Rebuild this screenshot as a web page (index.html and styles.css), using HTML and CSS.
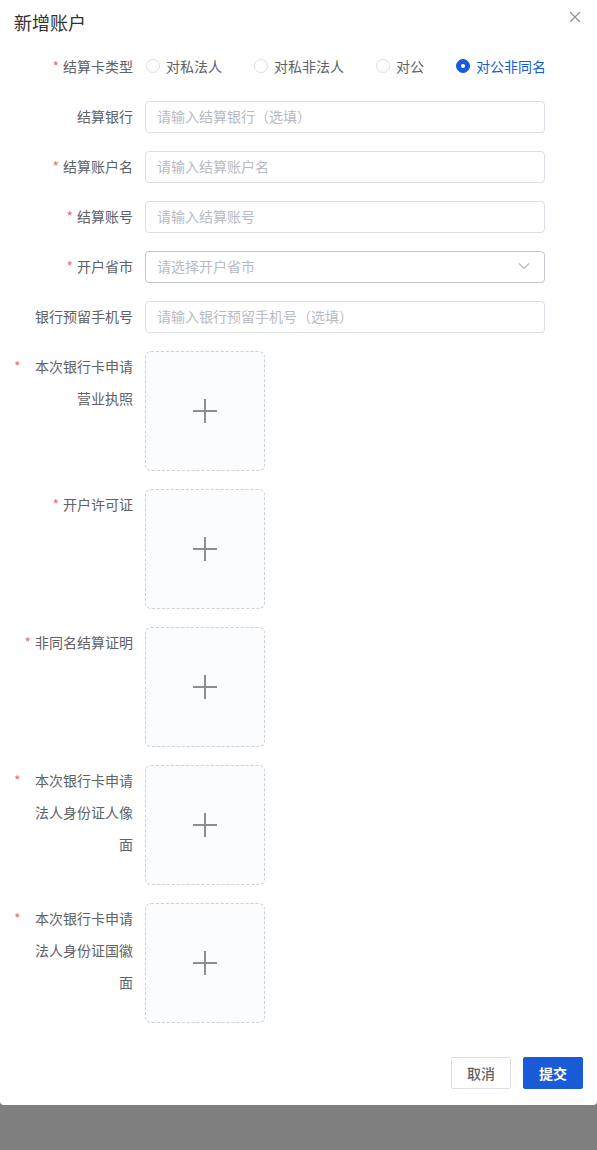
FILE: index.html
```html
<!DOCTYPE html>
<html lang="zh-CN">
<head>
<meta charset="utf-8">
<title>新增账户</title>
<link rel="stylesheet" href="styles.css">
</head>
<body>
<div class="dialog">
  <div class="dialog-header">
    <span class="dialog-title">新增账户</span>
    <button class="close" aria-label="关闭">
      <svg width="12" height="12" viewBox="0 0 12 12"><path d="M1 1L11 11M11 1L1 11" stroke="#909399" stroke-width="1.2" fill="none"/></svg>
    </button>
  </div>
  <form class="form">
    <div class="row">
      <label class="label"><span class="star">*</span><span class="ltext">结算卡类型</span></label>
      <div class="control radios">
        <span class="radio"><span class="circle"></span><span class="rtext">对私法人</span></span>
        <span class="radio"><span class="circle"></span><span class="rtext">对私非法人</span></span>
        <span class="radio"><span class="circle"></span><span class="rtext">对公</span></span>
        <span class="radio checked"><span class="circle"></span><span class="rtext">对公非同名</span></span>
      </div>
    </div>
    <div class="row">
      <label class="label"><span class="ltext">结算银行</span></label>
      <div class="control"><input class="input" placeholder="请输入结算银行（选填）"></div>
    </div>
    <div class="row">
      <label class="label"><span class="star">*</span><span class="ltext">结算账户名</span></label>
      <div class="control"><input class="input" placeholder="请输入结算账户名"></div>
    </div>
    <div class="row">
      <label class="label"><span class="star">*</span><span class="ltext">结算账号</span></label>
      <div class="control"><input class="input" placeholder="请输入结算账号"></div>
    </div>
    <div class="row">
      <label class="label"><span class="star">*</span><span class="ltext">开户省市</span></label>
      <div class="control">
        <div class="select">
          <span class="placeholder">请选择开户省市</span>
          <svg class="arrow" width="12" height="8" viewBox="0 0 12 8"><path d="M1 1.5L6 6.5L11 1.5" stroke="#b4b7be" stroke-width="1.2" fill="none"/></svg>
        </div>
      </div>
    </div>
    <div class="row">
      <label class="label"><span class="ltext">银行预留手机号</span></label>
      <div class="control"><input class="input" placeholder="请输入银行预留手机号（选填）"></div>
    </div>
    <div class="row">
      <label class="label"><span class="star">*</span><span class="ltext">本次银行卡申请营业执照</span></label>
      <div class="control"><div class="upload"><span class="plus"></span></div></div>
    </div>
    <div class="row">
      <label class="label"><span class="star">*</span><span class="ltext">开户许可证</span></label>
      <div class="control"><div class="upload"><span class="plus"></span></div></div>
    </div>
    <div class="row">
      <label class="label"><span class="star">*</span><span class="ltext">非同名结算证明</span></label>
      <div class="control"><div class="upload"><span class="plus"></span></div></div>
    </div>
    <div class="row">
      <label class="label"><span class="star">*</span><span class="ltext">本次银行卡申请法人身份证人像面</span></label>
      <div class="control"><div class="upload"><span class="plus"></span></div></div>
    </div>
    <div class="row">
      <label class="label"><span class="star">*</span><span class="ltext">本次银行卡申请法人身份证国徽面</span></label>
      <div class="control"><div class="upload"><span class="plus"></span></div></div>
    </div>
  </form>
  <div class="footer">
    <button class="btn">取消</button>
    <button class="btn primary">提交</button>
  </div>
</div>
</body>
</html>
```

FILE: styles.css
```css
* { box-sizing: border-box; }
html, body { margin: 0; padding: 0; }
body {
  background: #7f7f7f;
  font-family: "Noto Sans CJK SC", "Noto Sans", sans-serif;
  font-size: 14px;
  color: #606266;
  height: 1150px;
}
.dialog {
  width: 597px;
  background: #fff;
  border-radius: 0 0 4px 4px;
}
.dialog-header {
  height: 51px;
  padding: 8px 14px 0 14px;
  display: flex;
  justify-content: space-between;
  align-items: flex-start;
}
.dialog-title {
  font-size: 18px;
  line-height: 28px;
  color: #303133;
}
.close {
  border: 0;
  background: none;
  padding: 0;
  margin: 3px 2px 0 0;
  width: 12px;
  height: 12px;
  display: flex;
}
.form {
  padding: 0 52px 0 14px;
}
.row {
  display: flex;
  margin-bottom: 18px;
}
.label {
  width: 119px;
  flex: none;
  margin-right: 12px;
  margin-top: -1px;
  display: flex;
  justify-content: flex-end;
  align-items: flex-start;
  line-height: 32px;
  color: #606266;
}
.star {
  color: #f56c6c;
  margin-right: 4px;
  flex: none;
}
.ltext {
  text-align: right;
  min-width: 0;
}
.control {
  flex: 1;
  min-width: 0;
}
.radios {
  display: flex;
  align-items: center;
  height: 32px;
  padding-bottom: 2px;
}
.radio {
  display: flex;
  align-items: center;
  flex: none;
  white-space: nowrap;
  margin-right: 31px;
  color: #606266;
}
.radio:last-child { margin-right: 0; }
.circle {
  width: 14px;
  height: 14px;
  border: 1px solid #dcdfe6;
  border-radius: 50%;
  margin-left: 1px;
  margin-right: 6px;
  background: #fff;
  position: relative;
  flex: none;
}
.radio.checked .circle {
  background: #1a5cd7;
  border-color: #1a5cd7;
}
.radio.checked .circle::after {
  content: "";
  position: absolute;
  width: 4px;
  height: 4px;
  border-radius: 50%;
  background: #fff;
  left: 4px;
  top: 4px;
}
.radio.checked .rtext { color: #1a5cd7; }
.input {
  width: 400px;
  height: 32px;
  border: 1px solid #dcdfe6;
  border-radius: 4px;
  padding: 0 11px 2px 11px;
  font-family: inherit;
  font-size: 14px;
  color: #606266;
  outline: none;
  display: block;
}
.input::placeholder { color: #b8bbc2; }
.select {
  width: 400px;
  height: 32px;
  border: 1px solid #c4c7ce;
  border-radius: 4px;
  padding: 0 14px 2px 11px;
  display: flex;
  align-items: center;
  justify-content: space-between;
}
.placeholder { color: #b8bbc2; }
.upload {
  width: 120px;
  height: 120px;
  border: 1px dashed #cdd0d6;
  border-radius: 6px;
  background: #fbfcfe;
  display: flex;
  align-items: center;
  justify-content: center;
}
.plus {
  width: 24px;
  height: 24px;
  position: relative;
}
.plus::before, .plus::after {
  content: "";
  position: absolute;
  background: #8c8d94;
}
.plus::before { left: 0; right: 0; top: 11px; height: 2px; }
.plus::after { top: 0; bottom: 0; left: 11px; width: 2px; }
.footer {
  display: flex;
  justify-content: flex-end;
  gap: 12px;
  padding: 16px 14px 16px 14px;
}
.btn {
  width: 60px;
  height: 32px;
  border: 1px solid #dcdfe6;
  border-radius: 2px;
  background: #fff;
  color: #606266;
  font-family: inherit;
  font-size: 14px;
  font-weight: 500;
  padding: 0;
}
.btn.primary {
  background: #1a5cd7;
  border-color: #1a5cd7;
  color: #fff;
  font-weight: 700;
}
```
